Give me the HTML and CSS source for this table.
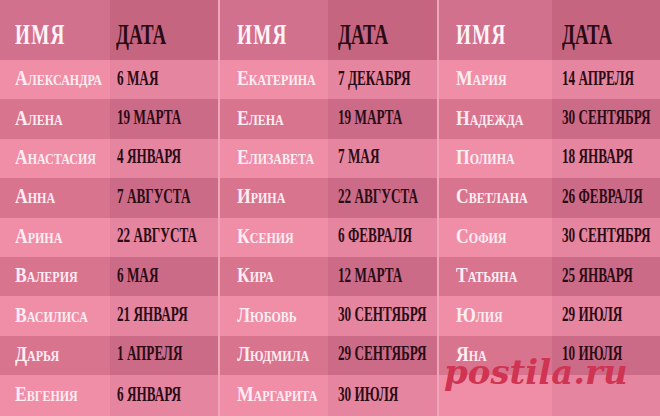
FILE: index.html
```html
<!DOCTYPE html>
<html lang="ru">
<head>
<meta charset="utf-8">
<title>Имена и даты</title>
<link rel="stylesheet" href="styles.css">
</head>
<body>
<div class="board">
  <div class="group g1">
    <div class="cell hn"><span class="t">Имя</span></div>
    <div class="cell hd"><span class="t">Дата</span></div>
    <div class="cell n l"><span class="t">Александра</span></div><div class="cell d l"><span class="t">6 мая</span></div>
    <div class="cell n k"><span class="t">Алена</span></div><div class="cell d k"><span class="t">19 марта</span></div>
    <div class="cell n l"><span class="t">Анастасия</span></div><div class="cell d l"><span class="t">4 января</span></div>
    <div class="cell n k"><span class="t">Анна</span></div><div class="cell d k"><span class="t">7 августа</span></div>
    <div class="cell n l"><span class="t">Арина</span></div><div class="cell d l"><span class="t">22 августа</span></div>
    <div class="cell n k"><span class="t">Валерия</span></div><div class="cell d k"><span class="t">6 мая</span></div>
    <div class="cell n l"><span class="t">Василиса</span></div><div class="cell d l"><span class="t">21 января</span></div>
    <div class="cell n k"><span class="t">Дарья</span></div><div class="cell d k"><span class="t">1 апреля</span></div>
    <div class="cell n l"><span class="t">Евгения</span></div><div class="cell d l"><span class="t">6 января</span></div>
  </div>
  <div class="group g2">
    <div class="cell hn"><span class="t">Имя</span></div>
    <div class="cell hd"><span class="t">Дата</span></div>
    <div class="cell n l"><span class="t">Екатерина</span></div><div class="cell d l"><span class="t">7 декабря</span></div>
    <div class="cell n k"><span class="t">Елена</span></div><div class="cell d k"><span class="t">19 марта</span></div>
    <div class="cell n l"><span class="t">Елизавета</span></div><div class="cell d l"><span class="t">7 мая</span></div>
    <div class="cell n k"><span class="t">Ирина</span></div><div class="cell d k"><span class="t">22 августа</span></div>
    <div class="cell n l"><span class="t">Ксения</span></div><div class="cell d l"><span class="t">6 февраля</span></div>
    <div class="cell n k"><span class="t">Кира</span></div><div class="cell d k"><span class="t">12 марта</span></div>
    <div class="cell n l"><span class="t">Любовь</span></div><div class="cell d l"><span class="t">30 сентября</span></div>
    <div class="cell n k"><span class="t">Людмила</span></div><div class="cell d k"><span class="t">29 сентября</span></div>
    <div class="cell n l"><span class="t">Маргарита</span></div><div class="cell d l"><span class="t">30 июля</span></div>
  </div>
  <div class="group g3">
    <div class="cell hn"><span class="t">Имя</span></div>
    <div class="cell hd"><span class="t">Дата</span></div>
    <div class="cell n l"><span class="t">Мария</span></div><div class="cell d l"><span class="t">14 апреля</span></div>
    <div class="cell n k"><span class="t">Надежда</span></div><div class="cell d k"><span class="t">30 сентября</span></div>
    <div class="cell n l"><span class="t">Полина</span></div><div class="cell d l"><span class="t">18 января</span></div>
    <div class="cell n k"><span class="t">Светлана</span></div><div class="cell d k"><span class="t">26 февраля</span></div>
    <div class="cell n l"><span class="t">София</span></div><div class="cell d l"><span class="t">30 сентября</span></div>
    <div class="cell n k"><span class="t">Татьяна</span></div><div class="cell d k"><span class="t">25 января</span></div>
    <div class="cell n l"><span class="t">Юлия</span></div><div class="cell d l"><span class="t">29 июля</span></div>
    <div class="cell n k"><span class="t">Яна</span></div><div class="cell d k"><span class="t">10 июля</span></div>
    <div class="cell n l"></div><div class="cell d l"></div>
  </div>
  <div class="mark">postila.ru</div>
</div>
</body>
</html>
```

FILE: styles.css
```css
html, body {
  margin: 0;
  padding: 0;
}
body {
  background: #e9879f;
}
.board {
  position: relative;
  display: flex;
  gap: 2px;
  width: 660px;
  height: 416px;
  overflow: hidden;
  background: #efa6ba;
}
.group {
  display: grid;
  grid-template-rows: 60px repeat(8, 39.4px) 1fr;
}
.g1 { grid-template-columns: 110px 108px; }
.g2 { grid-template-columns: 108px 109px; }
.g3 { grid-template-columns: 113px 108px; }

.cell {
  display: flex;
  align-items: center;
  white-space: nowrap;
  font-family: "Liberation Serif", "Times New Roman", serif;
  font-weight: bold;
  box-sizing: border-box;
}
.t {
  display: inline-block;
  transform-origin: left center;
}

/* header */
.hn, .hd {
  font-size: 29px;
  padding-top: 9px;
}
.hn {
  background: #d2718d;
  color: #fff4f7;
  padding-left: 15px;
}
.hn .t {
  text-transform: uppercase;
  letter-spacing: 2px;
  transform: scaleX(0.66);
}
.hd {
  background: #c5657f;
  color: #2a0a14;
  padding-left: 6px;
}
.hd .t {
  text-transform: uppercase;
  transform: scaleX(0.65);
}
.g2 .hn, .g3 .hn { padding-left: 17px; }
.g2 .hd, .g3 .hd { padding-left: 10px; }

/* body cells */
.n {
  font-size: 22px;
  color: #fdedf2;
  padding-left: 15px;
  padding-bottom: 3px;
}
.n .t {
  font-variant: small-caps;
  transform: scaleX(0.8);
}
.d {
  font-size: 20px;
  color: #2b0c16;
  padding-left: 7px;
  padding-bottom: 3px;
}
.d .t {
  text-transform: uppercase;
  transform: scaleX(0.66);
}
.g2 .n, .g3 .n { padding-left: 17px; }
.g2 .d, .g3 .d { padding-left: 10px; }

.n.l { background: #f08ea8; }
.d.l { background: #e5859f; }
.n.k { background: #d9748f; }
.d.k { background: #cc6b87; }

/* watermark */
.mark {
  position: absolute;
  left: 444px;
  top: 355px;
  font-family: "DejaVu Serif", serif;
  font-weight: bold;
  font-style: italic;
  font-size: 34px;
  line-height: 1;
  color: #cf3553;
  white-space: nowrap;
}
```
